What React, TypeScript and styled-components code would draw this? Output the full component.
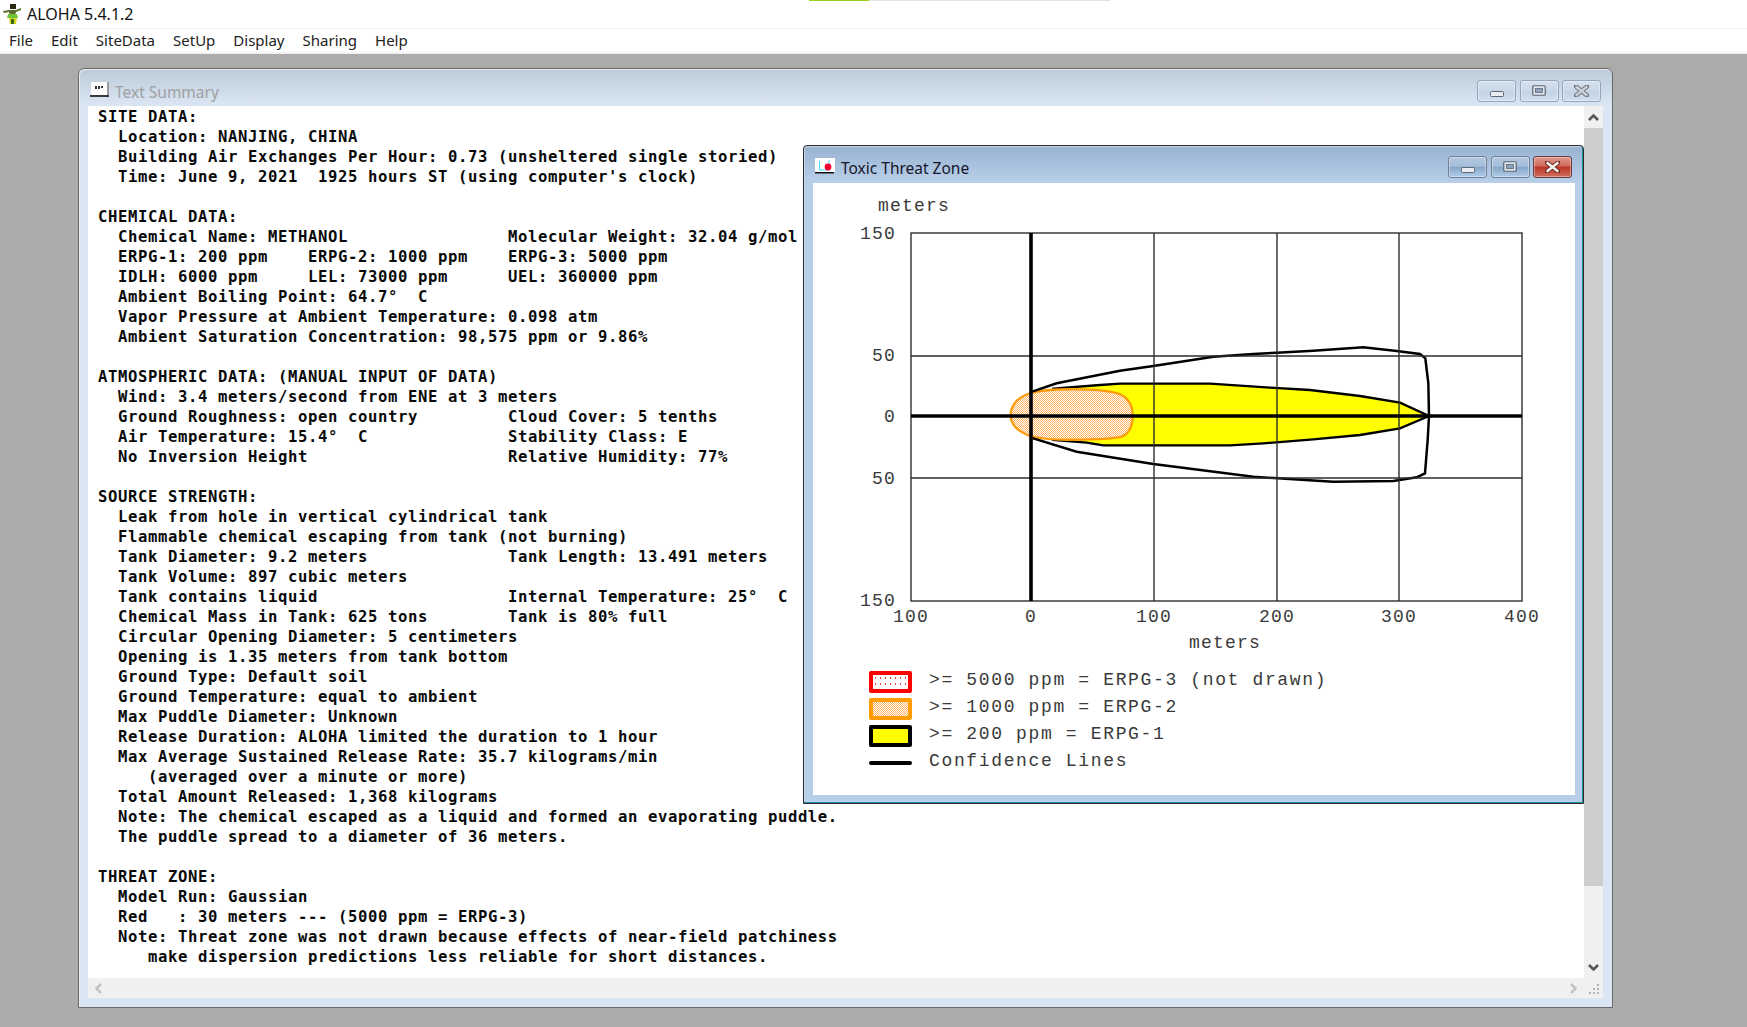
import React from "react";
import styled, { createGlobalStyle } from "styled-components";

const Global = createGlobalStyle`
  html, body { margin: 0; padding: 0; background: #ababab; }
  #root { width: 1747px; height: 1027px; overflow: hidden; }
`;

const Page = styled.div`
  position: relative;
  width: 1747px;
  height: 1027px;
  display: flex;
  flex-direction: column;
  font-family: "Noto Sans", "Open Sans", sans-serif;
`;

const ProgressStrip = styled.div`
  position: absolute;
  left: 809px;
  top: 0;
  width: 301px;
  height: 1px;
  background: linear-gradient(to right, #9ccf1e 0 60px, #e2e2e2 60px);
`;

const TitleBar = styled.div`
  height: 29px;
  box-sizing: border-box;
  background: #fff;
  border-bottom: 1px solid #f1f1f1;
  display: flex;
  align-items: center;
  gap: 5px;
  padding: 0 0 0 2px;
  font-size: 16px;
  color: #111;
`;

const MenuBar = styled.div`
  height: 25px;
  box-sizing: border-box;
  background: linear-gradient(to bottom, #fff 0 22px, #ececec 25px);
  display: flex;
  align-items: center;
  gap: 18px;
  padding: 0 0 4px 9px;
  font-size: 15px;
  color: #222;
`;

const Workspace = styled.div`
  flex: 1;
  background: #ababab;
  padding: 14px 0 0 78px;
`;

const OuterWindow = styled.div`
  width: 1535px;
  height: 940px;
  box-sizing: border-box;
  border: 1px solid #696969;
  border-radius: 6px 6px 0 0;
  padding: 0 9px 9px;
  background: #dae6f3;
  box-shadow: inset 1px 1px 0 #e8eef5;
  display: flex;
  flex-direction: column;
  background-image: linear-gradient(to bottom, #bccbd9 0, #dae6f3 37px);
`;

const WindowHead = styled.div`
  height: 37px;
  flex: none;
  display: flex;
  align-items: center;
  gap: 6px;
  padding: 3px ${(p) => (p.$active ? "3px" : "2px")} 0 2px;
  box-sizing: border-box;
  font-size: 15.5px;
  color: ${(p) => (p.$active ? "#16162a" : "#a0a0a0")};
`;

const WindowLabel = styled.span`
  flex: 1;
  padding-top: ${(p) => (p.$active ? "4px" : "6px")};
`;

const Buttons = styled.div`
  display: flex;
  gap: 3.5px;
  margin-top: ${(p) => (p.$active ? "2px" : "4px")};
`;

const CtrlButton = styled.div`
  width: 39px;
  height: 22px;
  box-sizing: border-box;
  border-radius: 3px;
  display: flex;
  align-items: center;
  justify-content: center;
  border: 1px solid ${(p) => (p.$tone === "close" ? "#6f3a44" : p.$tone === "idle" ? "#93a6bd" : "#6f8199")};
  background: ${(p) =>
    p.$tone === "close"
      ? "linear-gradient(to bottom, #dd9a8e 0, #cf6a5a 45%, #b93522 50%, #d0705e 100%)"
      : p.$tone === "idle"
      ? "linear-gradient(to bottom, #d6e1ed, #c8d7e8 50%, #c2d3e6 55%, #d2e0ef)"
      : "linear-gradient(to bottom, #b5c9e0, #a5bedb 45%, #87a8cb 52%, #b2cbe6)"};
  box-shadow: inset 0 0 0 1px rgba(255, 255, 255, 0.35);
`;

const Client = styled.div`
  position: relative;
  flex: 1;
  min-height: 0;
  display: grid;
  grid-template-columns: 1fr 19px;
  grid-template-rows: 1fr 20px;
  background: #fff;
`;

const SummaryText = styled.pre`
  margin: 0;
  padding: 1px 0 0 10px;
  overflow: hidden;
  font-family: "DejaVu Sans Mono", "Liberation Mono", monospace;
  font-weight: 700;
  font-size: 15.6px;
  letter-spacing: 0.61px;
  line-height: 20px;
  color: #0a0a0a;
`;

const VScroll = styled.div`
  background: #f0f0f0;
  display: flex;
  flex-direction: column;
  align-items: center;
`;

const ScrollArrow = styled.div`
  height: 22px;
  flex: none;
  width: 100%;
  display: flex;
  align-items: center;
  justify-content: center;
`;

const VThumb = styled.div`
  width: 100%;
  height: 758px;
  background: #cdcdcd;
`;

const VSpacer = styled.div`
  flex: 1;
`;

const HScroll = styled.div`
  background: #f0f0f0;
  display: flex;
  align-items: center;
  justify-content: space-between;
  padding: 0 6px;
`;

const Corner = styled.div`
  background: #f0f0f0;
  display: flex;
  align-items: flex-end;
  justify-content: flex-end;
  padding: 0 3px 3px 0;
`;

const InnerWindow = styled.div`
  position: absolute;
  left: 715px;
  top: 39px;
  width: 781px;
  height: 659px;
  box-sizing: border-box;
  border: 1px solid #2b2b2b;
  border-radius: 4px 4px 0 0;
  padding: 0 8px 8px 9px;
  display: flex;
  flex-direction: column;
  background-color: #b9d0ea;
  background-image: linear-gradient(to bottom, #98b3d1 0, #b8cfe9 37px);
  box-shadow: inset -1px -1px 0 #1f8ea3, inset 1px 1px 0 #c8d6e6;
`;

const GraphPane = styled.div`
  flex: 1;
  background: #fff;
  display: flex;
  flex-direction: column;
`;

const ChartSvg = styled.svg`
  display: block;
  width: 762px;
  height: 485px;
  flex: none;
`;

const AxisText = styled.text`
  font-family: "Liberation Mono", monospace;
  font-size: 18px;
  letter-spacing: 1.2px;
  fill: #3a3a3a;
`;

const Legend = styled.div`
  display: flex;
  flex-direction: column;
  padding-left: 56px;
`;

const LegendRow = styled.div`
  height: 27px;
  display: flex;
  align-items: center;
  gap: 17px;
`;

const Swatch = styled.span`
  width: 43px;
  height: ${(p) => (p.$kind === "line" ? "4px" : "22px")};
  flex: none;
  box-sizing: border-box;
  border-radius: 2px;
  border: ${(p) =>
    p.$kind === "red" ? "4px solid #ff0000" : p.$kind === "orange" ? "4px solid #ff9c00" : p.$kind === "yellow" ? "4px solid #000" : "none"};
  background-color: ${(p) => (p.$kind === "yellow" ? "#ffff00" : p.$kind === "line" ? "#000" : "#fff")};
  background-image: ${(p) =>
    p.$kind === "red"
      ? "radial-gradient(circle, #f04040 0 0.8px, transparent 1px)"
      : p.$kind === "orange"
      ? "conic-gradient(#ffb366 25%, #fff 0 50%, #ffb366 0 75%, #fff 0)"
      : "none"};
  background-size: ${(p) => (p.$kind === "red" ? "5px 6px" : "2px 2px")};
`;

const LegendText = styled.span`
  font-family: "Liberation Mono", monospace;
  font-size: 18px;
  letter-spacing: 1.64px;
  color: #3a3a3a;
  white-space: pre;
  margin-top: -3px;
`;

const summary = `SITE DATA:
  Location: NANJING, CHINA
  Building Air Exchanges Per Hour: 0.73 (unsheltered single storied)
  Time: June 9, 2021  1925 hours ST (using computer's clock)

CHEMICAL DATA:
  Chemical Name: METHANOL                Molecular Weight: 32.04 g/mol
  ERPG-1: 200 ppm    ERPG-2: 1000 ppm    ERPG-3: 5000 ppm
  IDLH: 6000 ppm     LEL: 73000 ppm      UEL: 360000 ppm
  Ambient Boiling Point: 64.7°  C
  Vapor Pressure at Ambient Temperature: 0.098 atm
  Ambient Saturation Concentration: 98,575 ppm or 9.86%

ATMOSPHERIC DATA: (MANUAL INPUT OF DATA)
  Wind: 3.4 meters/second from ENE at 3 meters
  Ground Roughness: open country         Cloud Cover: 5 tenths
  Air Temperature: 15.4°  C              Stability Class: E
  No Inversion Height                    Relative Humidity: 77%

SOURCE STRENGTH:
  Leak from hole in vertical cylindrical tank
  Flammable chemical escaping from tank (not burning)
  Tank Diameter: 9.2 meters              Tank Length: 13.491 meters
  Tank Volume: 897 cubic meters
  Tank contains liquid                   Internal Temperature: 25°  C
  Chemical Mass in Tank: 625 tons        Tank is 80% full
  Circular Opening Diameter: 5 centimeters
  Opening is 1.35 meters from tank bottom
  Ground Type: Default soil
  Ground Temperature: equal to ambient
  Max Puddle Diameter: Unknown
  Release Duration: ALOHA limited the duration to 1 hour
  Max Average Sustained Release Rate: 35.7 kilograms/min
     (averaged over a minute or more)
  Total Amount Released: 1,368 kilograms
  Note: The chemical escaped as a liquid and formed an evaporating puddle.
  The puddle spread to a diameter of 36 meters.

THREAT ZONE:
  Model Run: Gaussian
  Red   : 30 meters --- (5000 ppm = ERPG-3)
  Note: Threat zone was not drawn because effects of near-field patchiness
     make dispersion predictions less reliable for short distances.`;

const menus = ["File", "Edit", "SiteData", "SetUp", "Display", "Sharing", "Help"];

const HulaIcon = () => (
  <svg width="20" height="22" viewBox="0 0 20 22">
    <rect x="8" y="1" width="6" height="5" fill="#2b2a10" />
    <path d="M1 8 L7 7 L14 7 L19 5 L19 7 L14 9 L13 12 L8 12 L7 9 L2 10Z" fill="#5b6b2a" />
    <path d="M6 11 H15 L16 15 H5Z" fill="#6fc23a" />
    <path d="M7 15 H15 L14 21 H8Z" fill="#d6d820" />
    <rect x="9" y="16" width="3" height="5" fill="#3f6a1a" />
  </svg>
);

const TextIcon = () => (
  <svg width="19" height="15" viewBox="0 0 19 15">
    <rect x="1" y="0" width="18" height="13" fill="#fff" />
    <rect x="17" y="0" width="2" height="14" fill="#9b9b9b" />
    <rect x="0" y="13" width="19" height="2" fill="#3a3a3a" />
    <rect x="5" y="4" width="2" height="3" fill="#333" />
    <rect x="8" y="4" width="2" height="3" fill="#333" />
    <rect x="11" y="4" width="2" height="2" fill="#333" />
  </svg>
);

const ZoneIcon = () => (
  <svg width="20" height="16" viewBox="0 0 20 16">
    <rect x="0" y="0" width="20" height="14" fill="#fff" />
    <path d="M4.5 3 V12 H14 M14 2 V8" stroke="#39e0ff" strokeWidth="1" fill="none" />
    <circle cx="13" cy="9" r="3.4" fill="#f5002e" />
    <rect x="0" y="14" width="19" height="1.5" fill="#111" />
  </svg>
);

const MinGlyph = () => (
  <svg width="14" height="7" viewBox="0 0 14 7" style={{ marginTop: 6 }}>
    <rect x="0.5" y="0.5" width="13" height="5" rx="1" fill="#e9edf2" stroke="#5d6675" />
  </svg>
);

const MaxGlyph = () => (
  <svg width="14" height="11" viewBox="0 0 14 11" style={{ marginTop: -2 }}>
    <rect x="0.75" y="0.75" width="12.5" height="9.5" rx="1" fill="#dfe5ec" stroke="#5d6675" strokeWidth="1.2" />
    <rect x="3.5" y="3.5" width="7" height="4" fill="#8ea3bb" stroke="#5d6675" strokeWidth="0.8" />
  </svg>
);

const CloseGlyph = ({ light }: { light?: boolean }) => (
  <svg width="15" height="12" viewBox="0 0 15 12" style={{ marginTop: -1 }}>
    <path
      d="M2 1.5 L13 10.5 M13 1.5 L2 10.5"
      stroke={light ? "#70747c" : "#6e2a20"}
      strokeWidth="4.4"
      strokeLinecap="round"
    />
    <path d="M2.5 2 L12.5 10 M12.5 2 L2.5 10" stroke={light ? "#c9d0d9" : "#f3f0ee"} strokeWidth="2.6" strokeLinecap="round" />
  </svg>
);

const Chevron = ({ dir, color }: { dir: "up" | "down" | "left" | "right"; color: string }) => {
  const d = {
    up: "M1 7 L5.5 2.5 L10 7",
    down: "M1 2 L5.5 6.5 L10 2",
    left: "M7 1 L2.5 5.5 L7 10",
    right: "M2 1 L6.5 5.5 L2 10",
  }[dir];
  const horizontal = dir === "left" || dir === "right";
  return (
    <svg width={horizontal ? 9 : 11} height={horizontal ? 11 : 9} viewBox={horizontal ? "0 0 9 11" : "0 0 11 9"}>
      <path d={d} fill="none" stroke={color} strokeWidth="2.6" />
    </svg>
  );
};

const Grip = () => (
  <svg width="11" height="11" viewBox="0 0 11 11">
    {[
      [8, 0],
      [8, 4],
      [4, 4],
      [8, 8],
      [4, 8],
      [0, 8],
    ].map(([x, y]) => (
      <rect key={`${x}-${y}`} x={x} y={y} width="2" height="2" fill="#b5b5b5" />
    ))}
  </svg>
);

const gx = (v: number) => v - 813;
const gy = (v: number) => v - 183;

const Chart = () => (
  <ChartSvg viewBox="0 0 762 485">
    <defs>
      <pattern id="orangeDots" width="6" height="6" patternUnits="userSpaceOnUse">
        <rect width="6" height="6" fill="#fff" />
        <rect width="3" height="3" fill="#ffb366" />
        <rect x="3" y="3" width="3" height="3" fill="#ffb366" />
      </pattern>
    </defs>

    <AxisText x={gx(878)} y={gy(210.5)}>meters</AxisText>
    {[
      ["150", 234],
      ["50", 356],
      ["0", 417],
      ["50", 479],
      ["150", 601],
    ].map(([t, y], i) => (
      <AxisText key={i} x={gx(896)} y={gy(Number(y) + 5)} textAnchor="end">
        {t}
      </AxisText>
    ))}
    {[
      ["100", 911],
      ["0", 1031],
      ["100", 1154],
      ["200", 1277],
      ["300", 1399],
      ["400", 1522],
    ].map(([t, x], i) => (
      <AxisText key={i} x={gx(Number(x))} y={gy(622)} textAnchor="middle">
        {t}
      </AxisText>
    ))}
    <AxisText x={gx(1189)} y={gy(648)}>meters</AxisText>

    <g transform={`translate(${gx(980)} ${gy(340)}) scale(${1 / 3})`}>
      <path
        d="M220 146 L360 135 L420 131 L690 131 L870 143 L990 150 L1140 168 L1260 188 L1347 228 L1260 265 L1140 285 L1000 298 L850 310 L750 316 L520 316 L370 316 L320 308 L220 300Z"
        fill="#ffff00"
        stroke="#000"
        strokeWidth="7"
      />
      <path
        d="M92 225 C92 195 115 170 150 160 C190 148 240 147 300 148 C350 149 400 152 425 165 C448 178 458 200 458 225 C458 255 450 280 425 290 C395 298 340 299 280 299 C220 300 180 297 150 288 C115 275 92 255 92 225Z"
        fill="url(#orangeDots)"
        stroke="#ff9c0a"
        strokeWidth="7"
      />
      <path
        d="M150 157 L230 130 L420 92 L520 78 L700 50 L820 42 L890 38 L1000 32 L1150 22 L1250 33 L1320 42 L1336 55 L1345 130 L1347 228 L1343 300 L1335 400 L1310 412 L1240 423 L1060 425 L940 418 L820 410 L520 372 L290 335 L150 292"
        fill="none"
        stroke="#000"
        strokeWidth="7.5"
      />
    </g>

    <g stroke="#2e2e2e" strokeWidth="1.4" fill="none">
      <rect x={gx(911)} y={gy(233)} width={611} height={368} />
      <path d={`M${gx(1154)} ${gy(233)} V${gy(601)} M${gx(1277)} ${gy(233)} V${gy(601)} M${gx(1399)} ${gy(233)} V${gy(601)}`} />
      <path d={`M${gx(911)} ${gy(356)} H${gx(1522)} M${gx(911)} ${gy(478)} H${gx(1522)}`} />
    </g>
    <g stroke="#000" strokeWidth="3.6" fill="none">
      <path d={`M${gx(1031)} ${gy(233)} V${gy(601)}`} />
      <path d={`M${gx(911)} ${gy(416)} H${gx(1522)}`} />
    </g>
  </ChartSvg>
);

export default function App() {
  return (
    <Page>
      <Global />
      <ProgressStrip />
      <TitleBar>
        <HulaIcon />
        <span>ALOHA 5.4.1.2</span>
      </TitleBar>
      <MenuBar>
        {menus.map((m) => (
          <span key={m}>{m}</span>
        ))}
      </MenuBar>
      <Workspace>
        <OuterWindow>
          <WindowHead>
            <TextIcon />
            <WindowLabel>Text Summary</WindowLabel>
            <Buttons>
              <CtrlButton $tone="idle"><MinGlyph /></CtrlButton>
              <CtrlButton $tone="idle"><MaxGlyph /></CtrlButton>
              <CtrlButton $tone="idle"><CloseGlyph light /></CtrlButton>
            </Buttons>
          </WindowHead>
          <Client>
            <SummaryText>{summary}</SummaryText>
            <VScroll>
              <ScrollArrow><Chevron dir="up" color="#555" /></ScrollArrow>
              <VThumb />
              <VSpacer />
              <ScrollArrow><Chevron dir="down" color="#555" /></ScrollArrow>
            </VScroll>
            <HScroll>
              <Chevron dir="left" color="#c4c4c4" />
              <Chevron dir="right" color="#c4c4c4" />
            </HScroll>
            <Corner><Grip /></Corner>
            <InnerWindow>
              <WindowHead $active>
                <ZoneIcon />
                <WindowLabel $active>Toxic Threat Zone</WindowLabel>
                <Buttons $active>
                  <CtrlButton><MinGlyph /></CtrlButton>
                  <CtrlButton><MaxGlyph /></CtrlButton>
                  <CtrlButton $tone="close"><CloseGlyph /></CtrlButton>
                </Buttons>
              </WindowHead>
              <GraphPane>
                <Chart />
                <Legend>
                  <LegendRow>
                    <Swatch $kind="red" />
                    <LegendText>{">= 5000 ppm = ERPG-3 (not drawn)"}</LegendText>
                  </LegendRow>
                  <LegendRow>
                    <Swatch $kind="orange" />
                    <LegendText>{">= 1000 ppm = ERPG-2"}</LegendText>
                  </LegendRow>
                  <LegendRow>
                    <Swatch $kind="yellow" />
                    <LegendText>{">= 200 ppm = ERPG-1"}</LegendText>
                  </LegendRow>
                  <LegendRow>
                    <Swatch $kind="line" />
                    <LegendText>Confidence Lines</LegendText>
                  </LegendRow>
                </Legend>
              </GraphPane>
            </InnerWindow>
          </Client>
        </OuterWindow>
      </Workspace>
    </Page>
  );
}
